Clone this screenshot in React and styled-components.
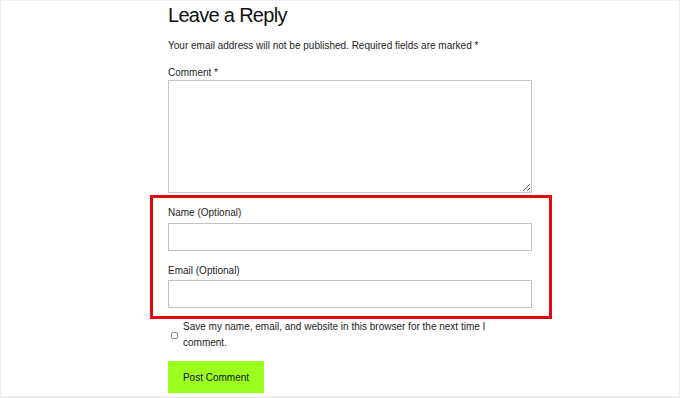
import styled, { createGlobalStyle } from "styled-components";

const GlobalStyle = createGlobalStyle`
  html, body {
    margin: 0;
    padding: 0;
    background: #fff;
  }
  body {
    font-family: "Liberation Sans", Arial, sans-serif;
    color: #1e1e1e;
  }
`;

const Frame = styled.div`
  box-sizing: border-box;
  width: 680px;
  height: 398px;
  border: 1px solid #efefef;
  border-bottom-width: 2px;
  overflow: hidden;
`;

const Column = styled.form`
  width: 364px;
  margin-left: 167px;
  display: flex;
  flex-direction: column;
`;

const Title = styled.h3`
  margin: 2px 0 0;
  font-size: 20px;
  line-height: 24px;
  font-weight: 400;
  letter-spacing: -0.7px;
  color: #111;
`;

const Notes = styled.p`
  margin: 11px 0 0;
  font-size: 10px;
  line-height: 16px;
`;

const Label = styled.label`
  display: block;
  font-size: 10px;
  line-height: 14px;
  margin-top: ${(p) => p.$top || 0}px;
  margin-bottom: ${(p) => p.$bottom || 0}px;
`;

const TextArea = styled.textarea`
  display: block;
  box-sizing: border-box;
  width: 100%;
  height: 113px;
  margin: 0;
  border: 1px solid #c8c8c8;
  border-radius: 0;
  font-family: inherit;
`;

const Highlight = styled.div`
  margin: 2px -20px 0 -18px;
  padding: 8px 17px 8px 15px;
  border: 3px solid #e4080f;
`;

const Input = styled.input`
  display: block;
  box-sizing: border-box;
  width: 100%;
  height: 28px;
  margin: 0;
  border: 1px solid #c3c3c3;
  border-radius: 0;
`;

const ConsentRow = styled.div`
  display: flex;
  align-items: center;
  gap: 5px;
  padding-left: 3px;
`;

const Check = styled.input`
  appearance: none;
  flex: none;
  width: 7px;
  height: 7px;
  margin: 0;
  border: 1px solid #8a8a8a;
  border-radius: 2px;
  background: #fff;
`;

const ConsentText = styled.label`
  max-width: 330px;
  font-size: 10px;
  line-height: 16px;
`;

const Submit = styled.button`
  align-self: flex-start;
  margin-top: 10px;
  width: 96px;
  height: 32px;
  border: none;
  border-radius: 0;
  background: #9cff1e;
  color: #111;
  font-family: inherit;
  font-size: 10px;
  padding: 0;
`;

export default function App() {
  return (
    <>
      <GlobalStyle />
      <Frame>
        <Column onSubmit={(e) => e.preventDefault()}>
          <Title>Leave a Reply</Title>
          <Notes>Your email address will not be published. Required fields are marked *</Notes>
          <Label htmlFor="comment" $top={12}>Comment *</Label>
          <TextArea id="comment" name="comment" />
          <Highlight>
            <Label htmlFor="author" $bottom={3}>Name (Optional)</Label>
            <Input id="author" name="author" type="text" />
            <Label htmlFor="email" $top={13} $bottom={2}>Email (Optional)</Label>
            <Input id="email" name="email" type="email" />
          </Highlight>
          <ConsentRow>
            <Check id="consent" type="checkbox" />
            <ConsentText htmlFor="consent">
              Save my name, email, and website in this browser for the next time I comment.
            </ConsentText>
          </ConsentRow>
          <Submit type="submit">Post Comment</Submit>
        </Column>
      </Frame>
    </>
  );
}
